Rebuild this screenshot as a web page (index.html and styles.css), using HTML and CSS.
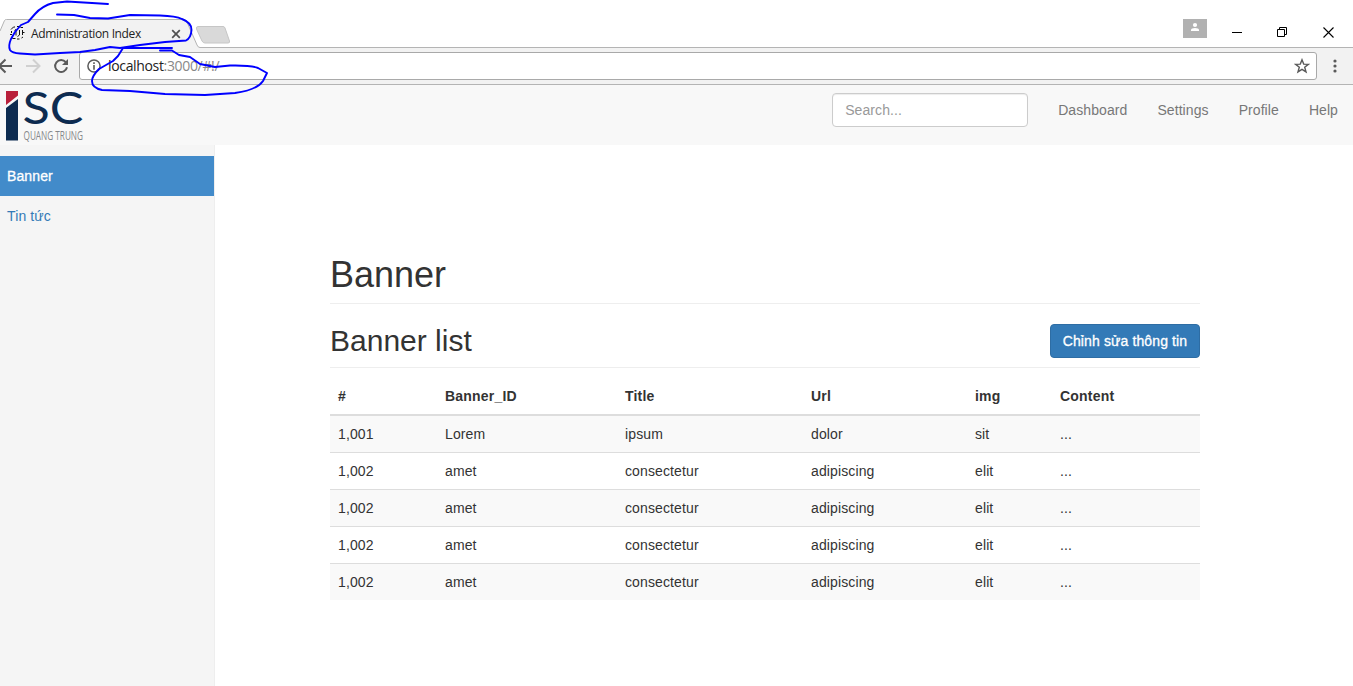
FILE: index.html
```html
<!DOCTYPE html>
<html lang="vi">
<head>
<meta charset="utf-8">
<title>Administration Index</title>
<link rel="stylesheet" href="styles.css">
</head>
<body>
<div class="screen">
  <div class="tabstrip">
    <svg class="tab-shape" width="236" height="48" viewBox="0 0 236 48">
      <path d="M0 31L4.500 20.500Q5 19.500 6.500 19.500H184Q185.500 19.500 186.500 21L197 45Q198 47.500 200 47.500V48H0Z" fill="#f2f2f2"/>
      <path d="M0 31L4.500 20.500Q5 19.500 6.500 19.500H184Q185.500 19.500 186.500 21L197 45Q198 47.500 200 47.500" fill="none" stroke="#b4b4b4"/>
      <path d="M198 26.500H223Q224.500 26.500 225 28L229.500 41Q230 43 228 43H205Q203 43 202 41L196.500 29Q196 26.500 198 26.500Z" fill="#d9d9d9" stroke="#c6c6c6"/>
    </svg>
    <svg class="favicon" width="16" height="16" viewBox="0 0 16 16" fill="none" stroke="#111"><path d="M2 4.500L4.500 2H6M8 1.500H10M11.500 2.500H14M2.500 6V8M1 9.500H3M2 12L4 13.500H6.500M8 14H10.500M12.500 13L14 12M13.500 5V10M5.500 5.500L7 4.500V10.500M10.500 5V10L8.500 11.500M14 7.500H15.500"/></svg>
    <span class="tab-title">Administration Index</span>
    <svg class="tab-close" width="10" height="10" viewBox="0 0 10 10"><path d="M1.200 1.200L8.800 8.800M8.800 1.200L1.200 8.800" stroke="#505050" stroke-width="1.700"/></svg>
    <div class="window-buttons">
      <span class="user"><svg width="24" height="19" viewBox="0 0 24 19"><circle cx="12" cy="6" r="2.100" fill="#fff"/><path d="M8 12V10.600Q8.300 9 12 9T16 10.600V12Z" fill="#fff"/></svg></span>
      <svg class="min" width="10" height="11" viewBox="0 0 10 11"><path d="M0 5.500H10" stroke="#000"/></svg>
      <svg class="restore" width="11" height="11" viewBox="0 0 11 11"><path d="M.5 2.500H7.500V9.500H.5ZM2.500 2.500V.5H9.500V7.500H7.500" fill="none" stroke="#000"/></svg>
      <svg width="11" height="11" viewBox="0 0 11 11"><path d="M.5 .5L10.500 10.500M10.500 .5L.5 10.500" stroke="#000" stroke-width="1.100"/></svg>
    </div>
  </div>
  <div class="toolbar">
    <svg width="79" height="36" viewBox="0 0 79 36" fill="none">
      <path d="M12 18H-1M5.500 11.500L-1 18L5.500 24.500" stroke="#5a5a5a" stroke-width="2"/>
      <path d="M26 18H39M33 11.500L39.500 18L33 24.500" stroke="#d0d0d0" stroke-width="2"/>
      <path d="M65.800 14.200A6 6 0 1 0 67 19.300" stroke="#5a5a5a" stroke-width="2"/><path d="M68 11V17H62Z" fill="#5a5a5a"/>
    </svg>
    <div class="address">
      <svg width="14" height="14" viewBox="0 0 14 14"><circle cx="7" cy="7" r="6.100" fill="none" stroke="#5a5a5a" stroke-width="1.500"/><path d="M7 3.300V5M7 6V10.700" stroke="#5a5a5a" stroke-width="1.600"/></svg>
      <span class="url">localhost<span class="path">:3000/#!/</span></span>
      <svg class="star" width="16" height="16" viewBox="0 0 16 16"><path d="M8 1.800L9.700 6.100L14.300 6.400L10.700 9.300L12 13.900L8 11.300L4 13.900L5.300 9.300L1.700 6.400L6.300 6.100Z" fill="none" stroke="#5a5a5a" stroke-width="1.400"/></svg>
    </div>
    <svg class="more" width="4" height="14" viewBox="0 0 4 14" fill="#5a5a5a"><circle cx="2" cy="2" r="1.600"/><circle cx="2" cy="7" r="1.600"/><circle cx="2" cy="12" r="1.600"/></svg>
  </div>
  <header class="navbar">
    <svg class="logo" width="100" height="60" viewBox="0 0 100 60">
      <path d="M6 6H18V10.500L6 20Z" fill="#b9203b"/>
      <path d="M6 23L18 14V55.500H6Z" fill="#0d2b50"/>
      <text x="22.500" y="38.500" class="logo-name" textLength="61" lengthAdjust="spacingAndGlyphs">SC</text>
      <text x="23.500" y="54.500" class="logo-sub" textLength="59.500" lengthAdjust="spacingAndGlyphs">QUANG TRUNG</text>
    </svg>
    <nav class="nav">
      <input class="search" type="text" placeholder="Search...">
      <a>Dashboard</a><a>Settings</a><a>Profile</a><a>Help</a>
    </nav>
  </header>
  <div class="body">
    <aside class="sidebar"><a class="active">Banner</a><a>Tin tức</a></aside>
    <main class="main">
      <h1>Banner</h1>
      <div class="subhead"><h2>Banner list</h2><button class="btn">Chỉnh sửa thông tin</button></div>
      <table>
        <colgroup><col class="c1"><col class="c2"><col class="c3"><col class="c4"><col class="c5"><col class="c6"></colgroup>
        <thead><tr><th>#</th><th>Banner_ID</th><th>Title</th><th>Url</th><th>img</th><th>Content</th></tr></thead>
        <tbody>
          <tr><td>1,001</td><td>Lorem</td><td>ipsum</td><td>dolor</td><td>sit</td><td>...</td></tr>
          <tr><td>1,002</td><td>amet</td><td>consectetur</td><td>adipiscing</td><td>elit</td><td>...</td></tr>
          <tr><td>1,002</td><td>amet</td><td>consectetur</td><td>adipiscing</td><td>elit</td><td>...</td></tr>
          <tr><td>1,002</td><td>amet</td><td>consectetur</td><td>adipiscing</td><td>elit</td><td>...</td></tr>
          <tr><td>1,002</td><td>amet</td><td>consectetur</td><td>adipiscing</td><td>elit</td><td>...</td></tr>
        </tbody>
      </table>
    </main>
  </div>
  <svg class="ink" width="280" height="100" viewBox="0 0 280 100">
    <path d="M108 4L92 3L67 1.500L53 3Q42 6 35 14L28 22L21 25L15 32L11 39Q8 46 10 50Q12 53 20 53.500L35 54.500L60 53L80 52L95 50L110 47L120 48L140 45L165 42L186 40.500Q191 38 191.500 30Q192 23 182 19Q176 16 160 15.500L130 15L108 18.500L90 18L74 15L57 14.500"/>
    <path d="M172 48L123 48L118 56L113 61L106 65L99 69Q92 76 92 81Q92 88 102 90L130 91L165 94L205 95L235 93Q257 90 263 81L267 73L258 68Q250 65 230 65.500L215 67L200 64L190 57L179 55L172 50.500L160 50.500"/>
  </svg>
</div>
</body>
</html>
```

FILE: styles.css
```css
* { box-sizing: border-box; }
body { margin: 0; overflow: hidden; background: #fff; color: #333; font: 14px/20px "Liberation Sans", Arial, sans-serif; letter-spacing: .12px; }
svg { display: block; flex: none; }
.screen { position: relative; width: 1353px; height: 686px; display: flex; flex-direction: column; }
.tabstrip { position: relative; height: 48px; flex: none; display: flex; align-items: center; padding: 19px 19px 0 9px; border-bottom: 1px solid #b4b4b4; }
.tab-shape { position: absolute; left: 0; top: 0; }
.favicon, .tab-title, .tab-close { position: relative; }
.tab-title { width: 138px; margin-left: 6px; padding-top: 1px; font: 12px/18px "Open Sans", "Noto Sans", sans-serif; letter-spacing: -.36px; color: #222; white-space: nowrap; }
.tab-close { margin: 1px 0 0 2px; }
.window-buttons { margin-left: auto; height: 27px; display: flex; align-items: center; padding-bottom: 2px; }
.user { width: 24px; height: 19px; margin: -8px 25px 0 0; background: #b1b1b1; }
.min { margin-right: 35px; }
.restore { margin-right: 35px; }
.toolbar { height: 37px; flex: none; display: flex; align-items: center; background: #f2f2f2; border-bottom: 1px solid #b4b4b4; }
.address { width: 1238px; height: 28px; display: flex; align-items: center; padding: 0 6px 0 7px; background: #fff; border: 1px solid #a9a9a9; border-radius: 3px; }
.url { margin-left: 7px; font: 14px/20px "Open Sans", "Noto Sans", sans-serif; letter-spacing: -.34px; color: #222; }
.path { color: #888; }
.star { margin-left: auto; }
.more { margin-left: 16px; }
.navbar { height: 60px; flex: none; display: flex; justify-content: space-between; background: #f8f8f8; }
.logo { overflow: visible; }
.logo-name { font: 45px Lato, sans-serif; fill: #0d2b50; letter-spacing: 0; }
.logo-sub { font: 12px "Open Sans", sans-serif; fill: #85878a; letter-spacing: 0; }
.nav { display: flex; align-items: flex-start; gap: 30px; padding: 8px 15px 0 0; color: #777; letter-spacing: .08px; }
.nav a { padding-top: 7px; }
.search { width: 196px; height: 34px; padding: 6px 12px; border: 1px solid #ccc; border-radius: 4px; box-shadow: inset 0 1px 1px rgba(0,0,0,.075); background: #fff; font: inherit; letter-spacing: inherit; }
.search::placeholder { color: #999; opacity: 1; }
.body { flex: 1; display: grid; grid-template-columns: 215px 1fr; }
.sidebar { padding-top: 11px; background: #f5f5f5; border-right: 1px solid #eee; }
.sidebar a { display: block; padding: 10px 7px; color: #337ab7; }
.sidebar .active { background: #428bca; color: #fff; -webkit-text-stroke: .3px #fff; }
.main { width: 870px; margin-left: 115px; padding-top: 109px; }
h1, h2 { margin: 0; font-weight: 400; letter-spacing: 0; }
h1 { height: 50px; font-size: 36px; line-height: 42px; border-bottom: 1px solid #eee; }
.subhead { height: 64px; padding-top: 20px; display: flex; justify-content: space-between; border-bottom: 1px solid #eee; }
h2 { font-size: 30px; line-height: 33px; }
.btn { width: 150px; height: 34px; padding: 0; background: #337ab7; border: 1px solid #2e6da4; border-radius: 4px; color: #fff; font: inherit; letter-spacing: inherit; white-space: nowrap; -webkit-text-stroke: .3px #fff; }
table { width: 870px; margin-top: 10px; table-layout: fixed; border-collapse: separate; border-spacing: 0; }
.c1 { width: 107px; } .c2 { width: 180px; } .c3 { width: 186px; } .c4 { width: 164px; } .c5 { width: 85px; } .c6 { width: 148px; }
th, td { padding: 8px; text-align: left; }
th { border-bottom: 2px solid #ddd; letter-spacing: .2px; }
td { border-top: 1px solid #ddd; }
tbody tr:first-child td { border-top: 0; }
tbody tr:nth-child(odd) { background: #f9f9f9; }
.ink { position: absolute; left: 0; top: 0; fill: none; stroke: #0000ff; stroke-width: 1.9; stroke-linecap: round; stroke-linejoin: round; }
```
